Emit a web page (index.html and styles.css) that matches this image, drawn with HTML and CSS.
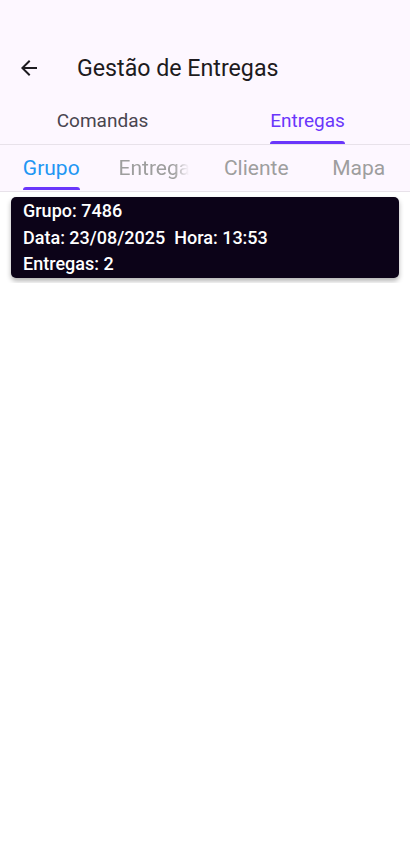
FILE: index.html
```html
<!doctype html>
<html>
	<head>
		<title>Gestão de Entregas</title>
		<meta charset="utf-8" />
		<link rel="stylesheet" href="styles.css">
	</head>
	<body>
		<div class="top">
			<div class="status"></div>
			<div class="appbar">
				<button class="back" title="voltar">
					<svg width="24" height="24" viewBox="0 0 24 24"><path d="M20 11H7.83l5.59-5.59L12 4l-8 8 8 8 1.41-1.41L7.83 13H20v-2z" fill="#1d1b20"/></svg>
				</button>
				<h1 class="title">Gestão de Entregas</h1>
			</div>
			<div class="tabs main">
				<div class="tab"><span class="label">Comandas</span></div>
				<div class="tab active"><span class="label">Entregas</span></div>
			</div>
			<div class="tabs sub">
				<div class="tab active"><span class="label">Grupo</span></div>
				<div class="tab"><span class="label fade">Entregas</span></div>
				<div class="tab"><span class="label">Cliente</span></div>
				<div class="tab"><span class="label">Mapa</span></div>
			</div>
		</div>
		<div class="list">
			<div class="card">
				<div>Grupo: 7486</div>
				<div>Data: 23/08/2025&nbsp; Hora: 13:53</div>
				<div>Entregas: 2</div>
			</div>
		</div>
	</body>
</html>
```

FILE: styles.css
```css
* { margin: 0; padding: 0; box-sizing: border-box; }
body { font-family: Roboto, "Noto Sans", sans-serif; background: #fff; color: #1d1b20; }
.top { background: #fdf7ff; }
.status { height: 40px; }
.appbar { height: 56px; display: flex; align-items: center; }
.back { border: 0; background: none; width: 24px; height: 24px; margin-left: 17px; display: flex; }
.title { font-size: 23.2px; font-weight: 400; margin-left: 36px; color: #1d1b20; }
.tabs { display: flex; border-bottom: 1px solid #e8e2ea; }
.tab { flex: 1; display: flex; justify-content: center; align-items: center; }
.label { position: relative; white-space: nowrap; }
.tab.active .label::after { content: ""; position: absolute; left: 0; right: 0; height: 3px; border-radius: 3px 3px 0 0; background: #6a36fb; }
.main .tab { height: 48px; }
.main .label { font-size: 19px; color: #49454f; }
.main .tab.active .label { color: #6a36fb; }
.main .tab.active .label::after { bottom: -12px; }
.sub .tab { height: 46px; padding: 0 16px; min-width: 0; }
.sub .label { font-size: 21px; color: #9e9e9e; }
.sub .tab.active .label { color: #2196f3; }
.sub .tab.active .label::after { bottom: -10px; }
.fade { overflow: hidden; width: 100%; -webkit-mask-image: linear-gradient(to right, #000 78%, transparent 100%); mask-image: linear-gradient(to right, #000 78%, transparent 100%); }
.list { padding: 5px 11px; }
.card { background: #0c0318; color: #fff; border-radius: 5px; padding: 1px 12px 0; font-size: 18px; font-weight: 500; line-height: 26.5px; box-shadow: 0 3px 5px rgba(0, 0, 0, .3); }
```
